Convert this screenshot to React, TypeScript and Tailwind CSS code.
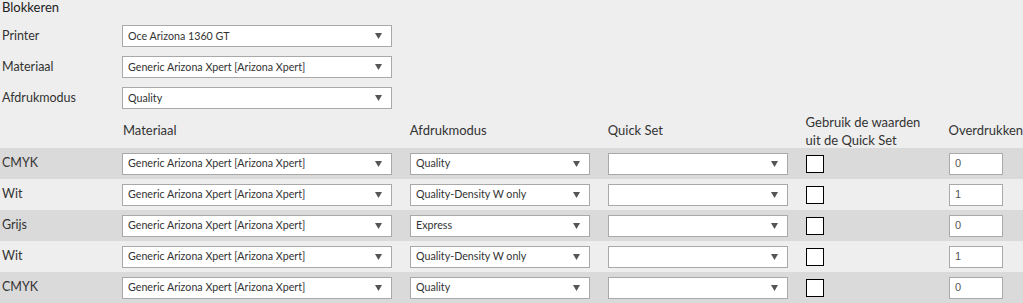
import React from 'react';

const font = { fontFamily: 'Lato, "Noto Sans", sans-serif' };

const Arrow: React.FC = () => (
  <svg width="7" height="6" viewBox="0 0 7 6" className="shrink-0">
    <path d="M0 0 H7 L3.5 6 Z" fill="#555555" />
  </svg>
);

const Select: React.FC<{ value: string; width: string }> = ({ value, width }) => (
  <div
    className={`${width} h-[22px] bg-white border border-[#a9a9a9] flex items-center justify-between pl-[5px] pr-[9px] text-[10.7px] text-[#333333] whitespace-nowrap`}
  >
    <span>{value}</span>
    <Arrow />
  </div>
);

const topRows = [
  { label: 'Printer', value: 'Oce Arizona 1360 GT' },
  { label: 'Materiaal', value: 'Generic Arizona Xpert [Arizona Xpert]' },
  { label: 'Afdrukmodus', value: 'Quality' },
];

const rows = [
  { label: 'CMYK', mode: 'Quality', over: '0' },
  { label: 'Wit', mode: 'Quality-Density W only', over: '1' },
  { label: 'Grijs', mode: 'Express', over: '0' },
  { label: 'Wit', mode: 'Quality-Density W only', over: '1' },
  { label: 'CMYK', mode: 'Quality', over: '0' },
];

export default function App() {
  return (
    <div className="w-[1023px] h-[303px] overflow-hidden bg-[#eeeeee] text-[#333333]" style={font}>
      <div className="h-[25px] pl-[2px] text-[13px] leading-[14px] text-[#222222]">Blokkeren</div>

      <div className="flex flex-col gap-[9px]">
        {topRows.map((r) => (
          <div key={r.label} className="flex items-center h-[22px]">
            <div className="w-[122px] pl-[2px] text-[12.5px]">{r.label}</div>
            <Select value={r.value} width="w-[270px]" />
          </div>
        ))}
      </div>

      <div className="flex items-center h-[39px] pt-[5px] text-[13px]">
        <div className="w-[122px]" />
        <div className="w-[288px] pl-[1px]">Materiaal</div>
        <div className="w-[198px]">Afdrukmodus</div>
        <div className="w-[198px]">Quick Set</div>
        <div className="w-[143px] leading-[18px]">
          Gebruik de waarden
          <br />
          uit de Quick Set
        </div>
        <div className="whitespace-nowrap">Overdrukken</div>
      </div>

      {rows.map((r, i) => (
        <div
          key={i}
          className={`flex items-center h-[31px] ${i % 2 === 0 ? 'bg-[#dadada]' : 'bg-[#eeeeee]'}`}
        >
          <div className="w-[122px] pl-[2px] text-[12.5px]">{r.label}</div>
          <div className="w-[288px]">
            <Select value="Generic Arizona Xpert [Arizona Xpert]" width="w-[270px]" />
          </div>
          <div className="w-[198px]">
            <Select value={r.mode} width="w-[180px]" />
          </div>
          <div className="w-[198px]">
            <Select value="" width="w-[180px]" />
          </div>
          <div className="w-[143px]">
            <div className="w-[18px] h-[18px] bg-white border border-black" />
          </div>
          <div
            className="w-[54px] h-[22px] bg-white border border-[#a9a9a9] flex items-center pl-[5px] text-[11px] text-[#555555]"
            style={{ fontFamily: '"Liberation Sans", Arial, sans-serif' }}
          >
            {r.over}
          </div>
        </div>
      ))}
    </div>
  );
}
